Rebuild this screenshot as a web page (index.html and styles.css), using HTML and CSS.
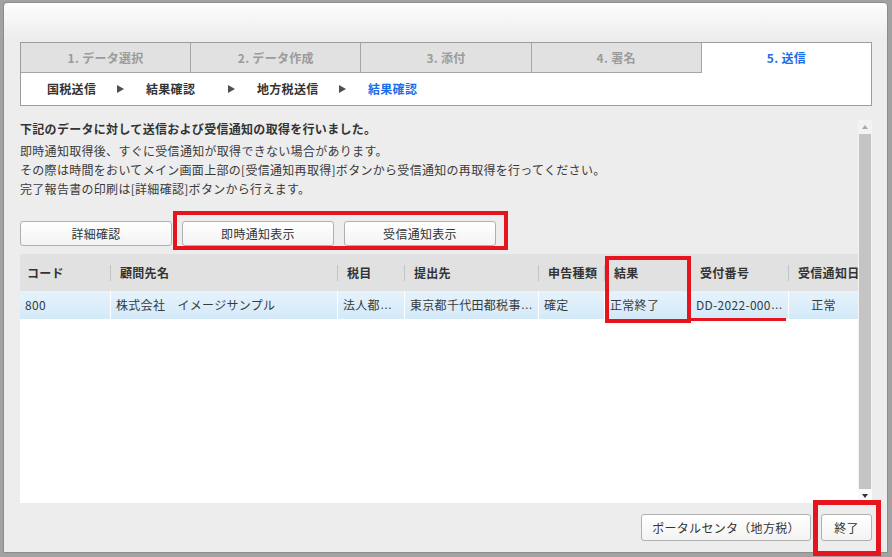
FILE: index.html
```html
<!DOCTYPE html>
<html lang="ja">
<head>
<meta charset="utf-8">
<title>送信</title>
<link rel="stylesheet" href="styles.css">
</head>
<body>
<div class="dialog">
  <div class="steps">
    <div class="tabs">
      <div class="tab">1. データ選択</div>
      <div class="tab">2. データ作成</div>
      <div class="tab">3. 添付</div>
      <div class="tab">4. 署名</div>
      <div class="tab active">5. 送信</div>
    </div>
    <div class="crumbs">
      <span class="crumb first">国税送信</span><span class="arrow"></span>
      <span class="crumb">結果確認</span><span class="arrow"></span>
      <span class="crumb">地方税送信</span><span class="arrow"></span>
      <span class="crumb current">結果確認</span>
    </div>
  </div>

  <div class="scrollwrap">
    <div class="content">
      <div class="message">
        <p class="lead">下記のデータに対して送信および受信通知の取得を行いました。</p>
        <p>即時通知取得後、すぐに受信通知が取得できない場合があります。</p>
        <p>その際は時間をおいてメイン画面上部の[受信通知再取得]ボタンから受信通知の再取得を行ってください。</p>
        <p>完了報告書の印刷は[詳細確認]ボタンから行えます。</p>
      </div>
      <div class="actions">
        <button class="btn">詳細確認</button>
        <button class="btn">即時通知表示</button>
        <button class="btn">受信通知表示</button>
      </div>
      <div class="grid">
        <div class="thead">
          <div class="th">コード</div>
          <div class="th">顧問先名</div>
          <div class="th">税目</div>
          <div class="th">提出先</div>
          <div class="th">申告種類</div>
          <div class="th">結果</div>
          <div class="th">受付番号</div>
          <div class="th">受信通知日</div>
        </div>
        <div class="trow">
          <div class="td">800</div>
          <div class="td">株式会社　イメージサンプル</div>
          <div class="td">法人都<span class="ell">…</span></div>
          <div class="td">東京都千代田都税事<span class="ell">…</span></div>
          <div class="td">確定</div>
          <div class="td">正常終了</div>
          <div class="td">DD-2022-000<span class="ell">…</span></div>
          <div class="td center">正常</div>
        </div>
      </div>
    </div>
    <div class="scrollbar">
      <div class="sb-up"></div>
      <div class="sb-thumb"></div>
      <div class="sb-down"></div>
    </div>
  </div>

  <div class="footer">
    <button class="btn portal">ポータルセンタ（地方税）</button>
    <button class="btn close">終了</button>
  </div>
</div>

<div class="annot box-actions"></div>
<div class="annot box-result"></div>
<div class="annot underline"></div>
<div class="annot box-close"></div>
</body>
</html>
```

FILE: styles.css
```css
* { box-sizing: border-box; }

html, body { margin: 0; padding: 0; }

body {
  position: relative;
  width: 892px;
  height: 557px;
  overflow: hidden;
  padding: 2px 4px 4px 3px;
  background: #a2a2a2;
  font-family: "Noto Sans CJK JP", sans-serif;
  font-size: 12px;
  letter-spacing: 0.3px;
  color: #333;
}

.dialog {
  width: 885px;
  height: 551px;
  border: 1px solid #8c8c8c;
  border-radius: 4px 4px 0 0;
  background: linear-gradient(#fdfdfd, #ededed 36px, #ededed);
  padding: 39px 15px 0 16px;
  display: flex;
  flex-direction: column;
}

/* step tabs */
.steps {
  width: 852px;
  border: 1px solid #9d9d9d;
  background: #fff;
}

.tabs {
  display: flex;
  height: 30px;
}

.tab {
  flex: 1;
  display: flex;
  align-items: center;
  justify-content: center;
  background: #e1e1e1;
  border-right: 1px solid #a5a5a5;
  border-bottom: 1px solid #a5a5a5;
  font-weight: bold;
  color: #9b9b9b;
  line-height: 16px;
}

.tab.active {
  background: #fff;
  border-right: 0;
  border-bottom: 0;
  color: #1b6de8;
}

.crumbs {
  height: 32px;
  display: flex;
  align-items: center;
  padding-left: 26px;
  font-weight: bold;
  color: #333;
  line-height: 16px;
}

.crumb { width: 82px; white-space: nowrap; }
.crumb.first { width: 70px; }
.crumb.current { color: #1b6de8; }

.arrow {
  width: 0;
  height: 0;
  border-left: 7px solid #505050;
  border-top: 4px solid transparent;
  border-bottom: 4px solid transparent;
  margin-right: 22px;
}

/* scroll area */
.scrollwrap {
  margin-top: 14px;
  width: 852px;
  height: 383px;
  display: flex;
}

.content {
  flex: 1;
  min-width: 0;
  display: flex;
  flex-direction: column;
}

.message p {
  margin: 0;
  line-height: 19px;
  white-space: nowrap;
  color: #3a3a3a;
}

.message .lead {
  font-weight: bold;
  line-height: 17px;
  margin-bottom: 4px;
  color: #333;
}

.actions {
  display: flex;
  gap: 10px;
  margin-top: 23px;
}

.btn {
  font-family: inherit;
  font-size: 12px;
  letter-spacing: 0.3px;
  color: #333;
  background: linear-gradient(#ffffff, #f3f3f3);
  border: 1px solid #b0b0b0;
  border-radius: 3px;
  padding: 0;
  line-height: 16px;
}

.actions .btn {
  width: 152px;
  height: 25px;
}

/* grid */
.grid {
  margin-top: 8px;
  flex: 1;
  background: #fff;
  overflow: hidden;
}

.thead,
.trow {
  display: grid;
  grid-template-columns: 90px 227px 67px 134px 66px 86px 98px 70px;
}

.thead {
  height: 37px;
  background: #e1e1e1;
  font-weight: bold;
}

.th {
  position: relative;
  display: flex;
  align-items: center;
  padding-left: 10px;
  white-space: nowrap;
  line-height: 16px;
}

.th:first-child { padding-left: 7px; }

.th + .th::before {
  content: "";
  position: absolute;
  left: 0;
  top: 11px;
  width: 1px;
  height: 16px;
  background: #c4c4c4;
}

.trow {
  height: 28px;
  background: linear-gradient(#e6f3fc, #d3e9f8);
}

.td {
  display: flex;
  align-items: center;
  padding-left: 5px;
  white-space: nowrap;
  overflow: hidden;
  line-height: 16px;
  color: #3a3a3a;
}

.td + .td { border-left: 1px solid #fff; }

.td.center {
  justify-content: center;
  padding-left: 0;
}

.ell {
  font-family: "Liberation Sans", sans-serif;
  font-size: 12px;
  letter-spacing: 0;
}

/* scrollbar */
.scrollbar {
  width: 14px;
  display: flex;
  flex-direction: column;
  background: #f3f3f3;
}

.sb-up,
.sb-down {
  height: 14px;
  display: flex;
  align-items: center;
  justify-content: center;
}

.sb-up::after {
  content: "";
  border-bottom: 4px solid #a8a8a8;
  border-left: 3.5px solid transparent;
  border-right: 3.5px solid transparent;
}

.sb-thumb {
  flex: 1;
  margin: 0 1px;
  background: #c4c4c4;
}

.sb-down { background: #fafafa; }

.sb-down::after {
  content: "";
  border-top: 4px solid #333;
  border-left: 3.5px solid transparent;
  border-right: 3.5px solid transparent;
}

/* footer */
.footer {
  flex: 1;
  display: flex;
  justify-content: flex-end;
  align-items: flex-start;
  gap: 10px;
  padding-top: 11px;
}

.footer .btn { height: 27px; }
.footer .portal { width: 170px; }
.footer .close { width: 51px; }

/* red annotation marks over the screenshot */
.annot {
  position: absolute;
  border: 4px solid #e5141d;
}

.box-actions { left: 173px; top: 211px; width: 335px; height: 39px; }
.box-result { left: 605px; top: 256px; width: 86px; height: 67px; }
.underline { left: 689px; top: 318px; width: 97px; height: 3px; border: 0; background: #e5141d; }
.box-close { left: 813px; top: 500px; width: 68px; height: 56px; border-width: 5px; }
```
